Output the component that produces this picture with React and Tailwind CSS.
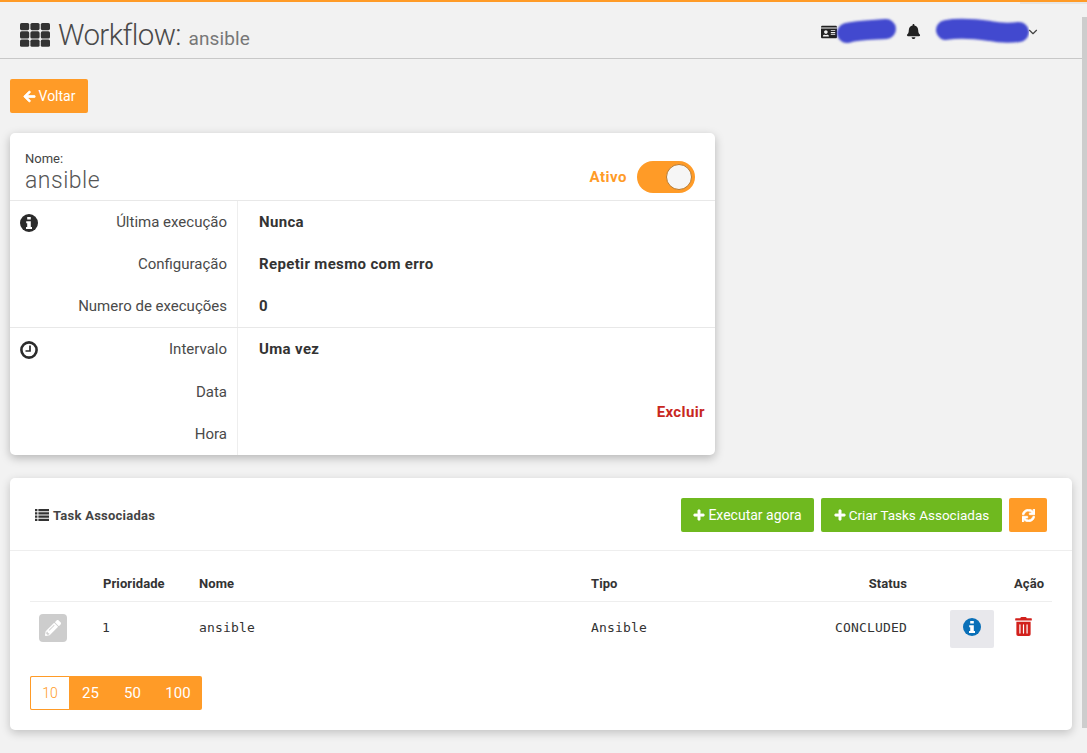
import { FaArrowLeft, FaBell, FaIdCard, FaPencilAlt, FaPlus, FaSync, FaTrashAlt } from "react-icons/fa";
import { FiChevronDown } from "react-icons/fi";

const sans = "font-['Roboto','Noto_Sans',sans-serif]";
const mono = "font-['DejaVu_Sans_Mono','Liberation_Mono',monospace] text-[13px] tracking-[0.17px]";

function Scribble({ id, width, d }) {
  return (
    <svg width={width} height="34" viewBox={`0 0 ${width} 34`} className="block">
      <defs>
        <filter id={id} filterUnits="userSpaceOnUse" x="0" y="0" width={width} height="34">
          <feGaussianBlur stdDeviation="1.3" />
        </filter>
      </defs>
      <path d={d} fill="none" stroke="#4349cf" strokeWidth="20" strokeLinecap="round" filter={`url(#${id})`} />
    </svg>
  );
}

function GridIcon() {
  const cells = [];
  for (let y = 0; y < 3; y++) {
    for (let x = 0; x < 3; x++) {
      cells.push(<rect key={`${x}${y}`} x={x * 10.4} y={y * 8.3} width="9.2" height="7.2" rx="1.6" fill="#333" />);
    }
  }
  return (
    <svg width="30" height="24" viewBox="0 0 30 24" className="block shrink-0">
      {cells}
    </svg>
  );
}

function InfoIcon({ color }) {
  return (
    <svg width="18" height="18" viewBox="0 0 18 18" className="block">
      <circle cx="9" cy="9" r="9" fill={color} />
      <path d="M7.2 3h3.6v2.6H7.2zM6.2 7.2h4.6v5.8H12v2H6v-2h1.2V9.2h-1z" fill="#fff" />
    </svg>
  );
}

function ClockIcon() {
  return (
    <svg width="18" height="18" viewBox="0 0 18 18" className="block">
      <circle cx="9" cy="9" r="7.6" fill="none" stroke="#2b2b2b" strokeWidth="2.6" />
      <path d="M10 4.5V10H5.5" fill="none" stroke="#2b2b2b" strokeWidth="1.7" />
    </svg>
  );
}

function ListIcon() {
  return (
    <svg width="14" height="12" viewBox="0 0 14 12" className="block">
      <path d="M0 0h2.4v2.2H0zM3.4 0H14v2.2H3.4zM0 3.2h2.4v2.2H0zM3.4 3.2H14v2.2H3.4zM0 6.5h2.4v2.2H0zM3.4 6.5H14v2.2H3.4zM0 9.8h2.4V12H0zM3.4 9.8H14V12H3.4z" fill="#333" />
    </svg>
  );
}

function InfoRow({ label, value, icon, tall }) {
  return (
    <div className={`grid grid-cols-[227px_1fr] items-center ${tall ? "h-[42.5px]" : "h-[42px]"}`}>
      <div className="relative pr-[10px] text-right text-[15px] text-[#4a4a4a]">
        {icon && <span className="absolute left-[10px] top-[3px]">{icon}</span>}
        {label}
      </div>
      <div className="pl-[22px] text-[15px] font-bold tracking-[0.35px] text-[#333]">{value}</div>
    </div>
  );
}

export default function App() {
  return (
    <div className={`${sans} relative min-h-[753px] bg-[#f2f2f2] border-t-2 border-[#ff9b27] overflow-hidden`}>
      {/* faixa da barra de rolagem */}
      <div className="absolute right-0 top-[15px] w-[5px] h-[711px] bg-[#cdcdcd]" />
      <div className="absolute right-0 top-0 w-[67px] h-[2px] bg-[#e6e6e6]" />

      <header className="h-[57px] border-b border-[#c8c8c8] flex items-center pl-[20px] pr-[47px]">
        <div className="mt-[10px]">
          <GridIcon />
        </div>
        <h1 className="ml-[8px] mt-[11px] text-[29.5px] font-light tracking-[-0.6px] text-[#4a4a4a] leading-none">
          Workflow: <span className="ml-[1px] text-[19px] font-normal tracking-[0.1px] text-[#777]">ansible</span>
        </h1>
        <div className="ml-auto flex items-center mt-[3px]">
          <FaIdCard className="text-[16px] text-[#222]" />
          <div className="-ml-[4px] w-[66px]">
            <Scribble id="blur1" width={66} d="M14 18 C25 15 40 15 53 14" />
          </div>
          <FaBell className="ml-[7px] text-[15px] text-[#222]" />
          <div className="ml-[9px] w-[99px]">
            <Scribble id="blur2" width={99} d="M16 15 C28 13 45 14 60 16 C70 18 80 18 89 17" />
          </div>
          <FiChevronDown className="-ml-[3px] text-[14px] text-[#444]" />
        </div>
      </header>

      <main className="pl-[10px] pr-[15px] pt-[20px] pb-[23px]">
        <button className="h-[34px] w-[78px] bg-[#ff9b27] rounded-[2px] text-white text-[14px] flex items-center justify-center gap-[3px]">
          <FaArrowLeft className="text-[13px] stroke-[30]" /> Voltar
        </button>

        <section className="mt-[20px] w-[705px] h-[322px] bg-white rounded-[5px] shadow-[0_3px_10px_rgba(0,0,0,0.25)]">
          <div className="h-[68px] border-b border-[#e8e8e8] flex items-start justify-between pl-[15px] pr-[20px]">
            <div className="pt-[18px]">
              <div className="text-[13px] text-[#444] leading-[15px]">Nome:</div>
              <div className="mt-[1px] text-[23px] font-light text-[#555] leading-[27px] tracking-[0.5px]">ansible</div>
            </div>
            <div className="flex items-center gap-[10px] pt-[28px]">
              <span className="text-[15px] font-bold tracking-[0.5px] text-[#ff9b27]">Ativo</span>
              <div className="w-[58px] h-[32px] rounded-full bg-[#ff9b27] flex items-center justify-end pr-[3px]">
                <div className="w-[26px] h-[26px] rounded-full bg-[#f6f6f6] border border-[#b87a30]" />
              </div>
            </div>
          </div>

          <div className="h-[127px] border-b border-[#e8e8e8] bg-[linear-gradient(#eee,#eee)] bg-no-repeat bg-[length:1px_100%] bg-[position:227px_0]">
            <InfoRow label="Última execução" value="Nunca" icon={<InfoIcon color="#2b2b2b" />} />
            <InfoRow label="Configuração" value="Repetir mesmo com erro" />
            <InfoRow label="Numero de execuções" value="0" />
          </div>

          <div className="relative h-[127px] bg-[linear-gradient(#eee,#eee)] bg-no-repeat bg-[length:1px_100%] bg-[position:227px_0]">
            <InfoRow tall label="Intervalo" value="Uma vez" icon={<ClockIcon />} />
            <InfoRow tall label="Data" value="" />
            <InfoRow tall label="Hora" value="" />
            <span className="absolute right-[10px] top-[73px] text-[15px] font-bold tracking-[0.4px] text-[#c8281e]">Excluir</span>
          </div>
        </section>

        <section className="mt-[23px] h-[252px] bg-white rounded-[5px] shadow-[0_3px_10px_rgba(0,0,0,0.2)]">
          <div className="h-[73px] border-b border-[#eee] flex items-center pl-[25px] pr-[25px] pt-[2px]">
            <ListIcon />
            <span className="ml-[4px] mt-[2px] text-[13px] font-bold tracking-[0.25px] text-[#444]">Task Associadas</span>
            <div className="ml-auto flex gap-[7px]">
              <button className="h-[34px] w-[133px] bg-[#6fb91f] rounded-[2px] text-white text-[14px] flex items-center justify-center gap-[3px]">
                <FaPlus className="text-[12px] stroke-[30]" /> Executar agora
              </button>
              <button className="h-[34px] w-[181px] bg-[#6fb91f] rounded-[2px] text-white text-[13.5px] flex items-center justify-center gap-[3px]">
                <FaPlus className="text-[12px] stroke-[30]" /> Criar Tasks Associadas
              </button>
              <button className="h-[34px] w-[38px] bg-[#ff9b27] rounded-[2px] text-white text-[13px] flex items-center justify-center">
                <FaSync className="stroke-[30]" />
              </button>
            </div>
          </div>

          <div className="px-[20px]">
            <div className="grid grid-cols-[72px_97px_392px_316px_1fr] h-[51px] items-end pb-[8px] border-b border-[#eee] text-[13px] font-bold tracking-[0.1px] text-[#333]">
              <span />
              <span className="pl-[1px]">Prioridade</span>
              <span>Nome</span>
              <span>Tipo</span>
              <span className="flex">
                <span className="-ml-[72px] w-[72px] text-right">Status</span>
                <span className="ml-[107px]">Ação</span>
              </span>
            </div>
            <div className="grid grid-cols-[72px_97px_392px_316px_1fr] h-[52px] items-center text-[#333]">
              <div className="pl-[9px]">
                <div className="w-[28px] h-[28px] rounded-[4px] bg-[#cdcdcd] flex items-center justify-center text-white text-[16px]">
                  <FaPencilAlt />
                </div>
              </div>
              <span className={mono}>1</span>
              <span className={mono}>ansible</span>
              <span className={mono}>Ansible</span>
              <div className="flex items-center">
                <span className={`${mono} -ml-[72px] w-[72px] text-right whitespace-nowrap`}>CONCLUDED</span>
                <div className="ml-[43px] mt-[2px] pb-[4px] w-[44px] h-[38px] shrink-0 rounded-[2px] bg-[#e8e8ec] flex items-center justify-center">
                  <InfoIcon color="#0a70b8" />
                </div>
                <FaTrashAlt className="ml-[20px] mb-[4px] shrink-0 text-[19px] text-[#d2201c]" />
              </div>
            </div>

            <div className="mt-[22px] w-[172px] h-[34px] flex items-center bg-[#ff9b27] rounded-[2px] text-[15px] text-white">
              <span className="w-[40px] h-full flex items-center justify-center bg-white border border-[#ff9b27] rounded-l-[2px] text-[14px] text-[#ff9b27] font-light">10</span>
              <span className="w-[41px] text-center">25</span>
              <span className="w-[43px] text-center">50</span>
              <span className="w-[48px] text-center">100</span>
            </div>
          </div>
        </section>
      </main>
    </div>
  );
}
